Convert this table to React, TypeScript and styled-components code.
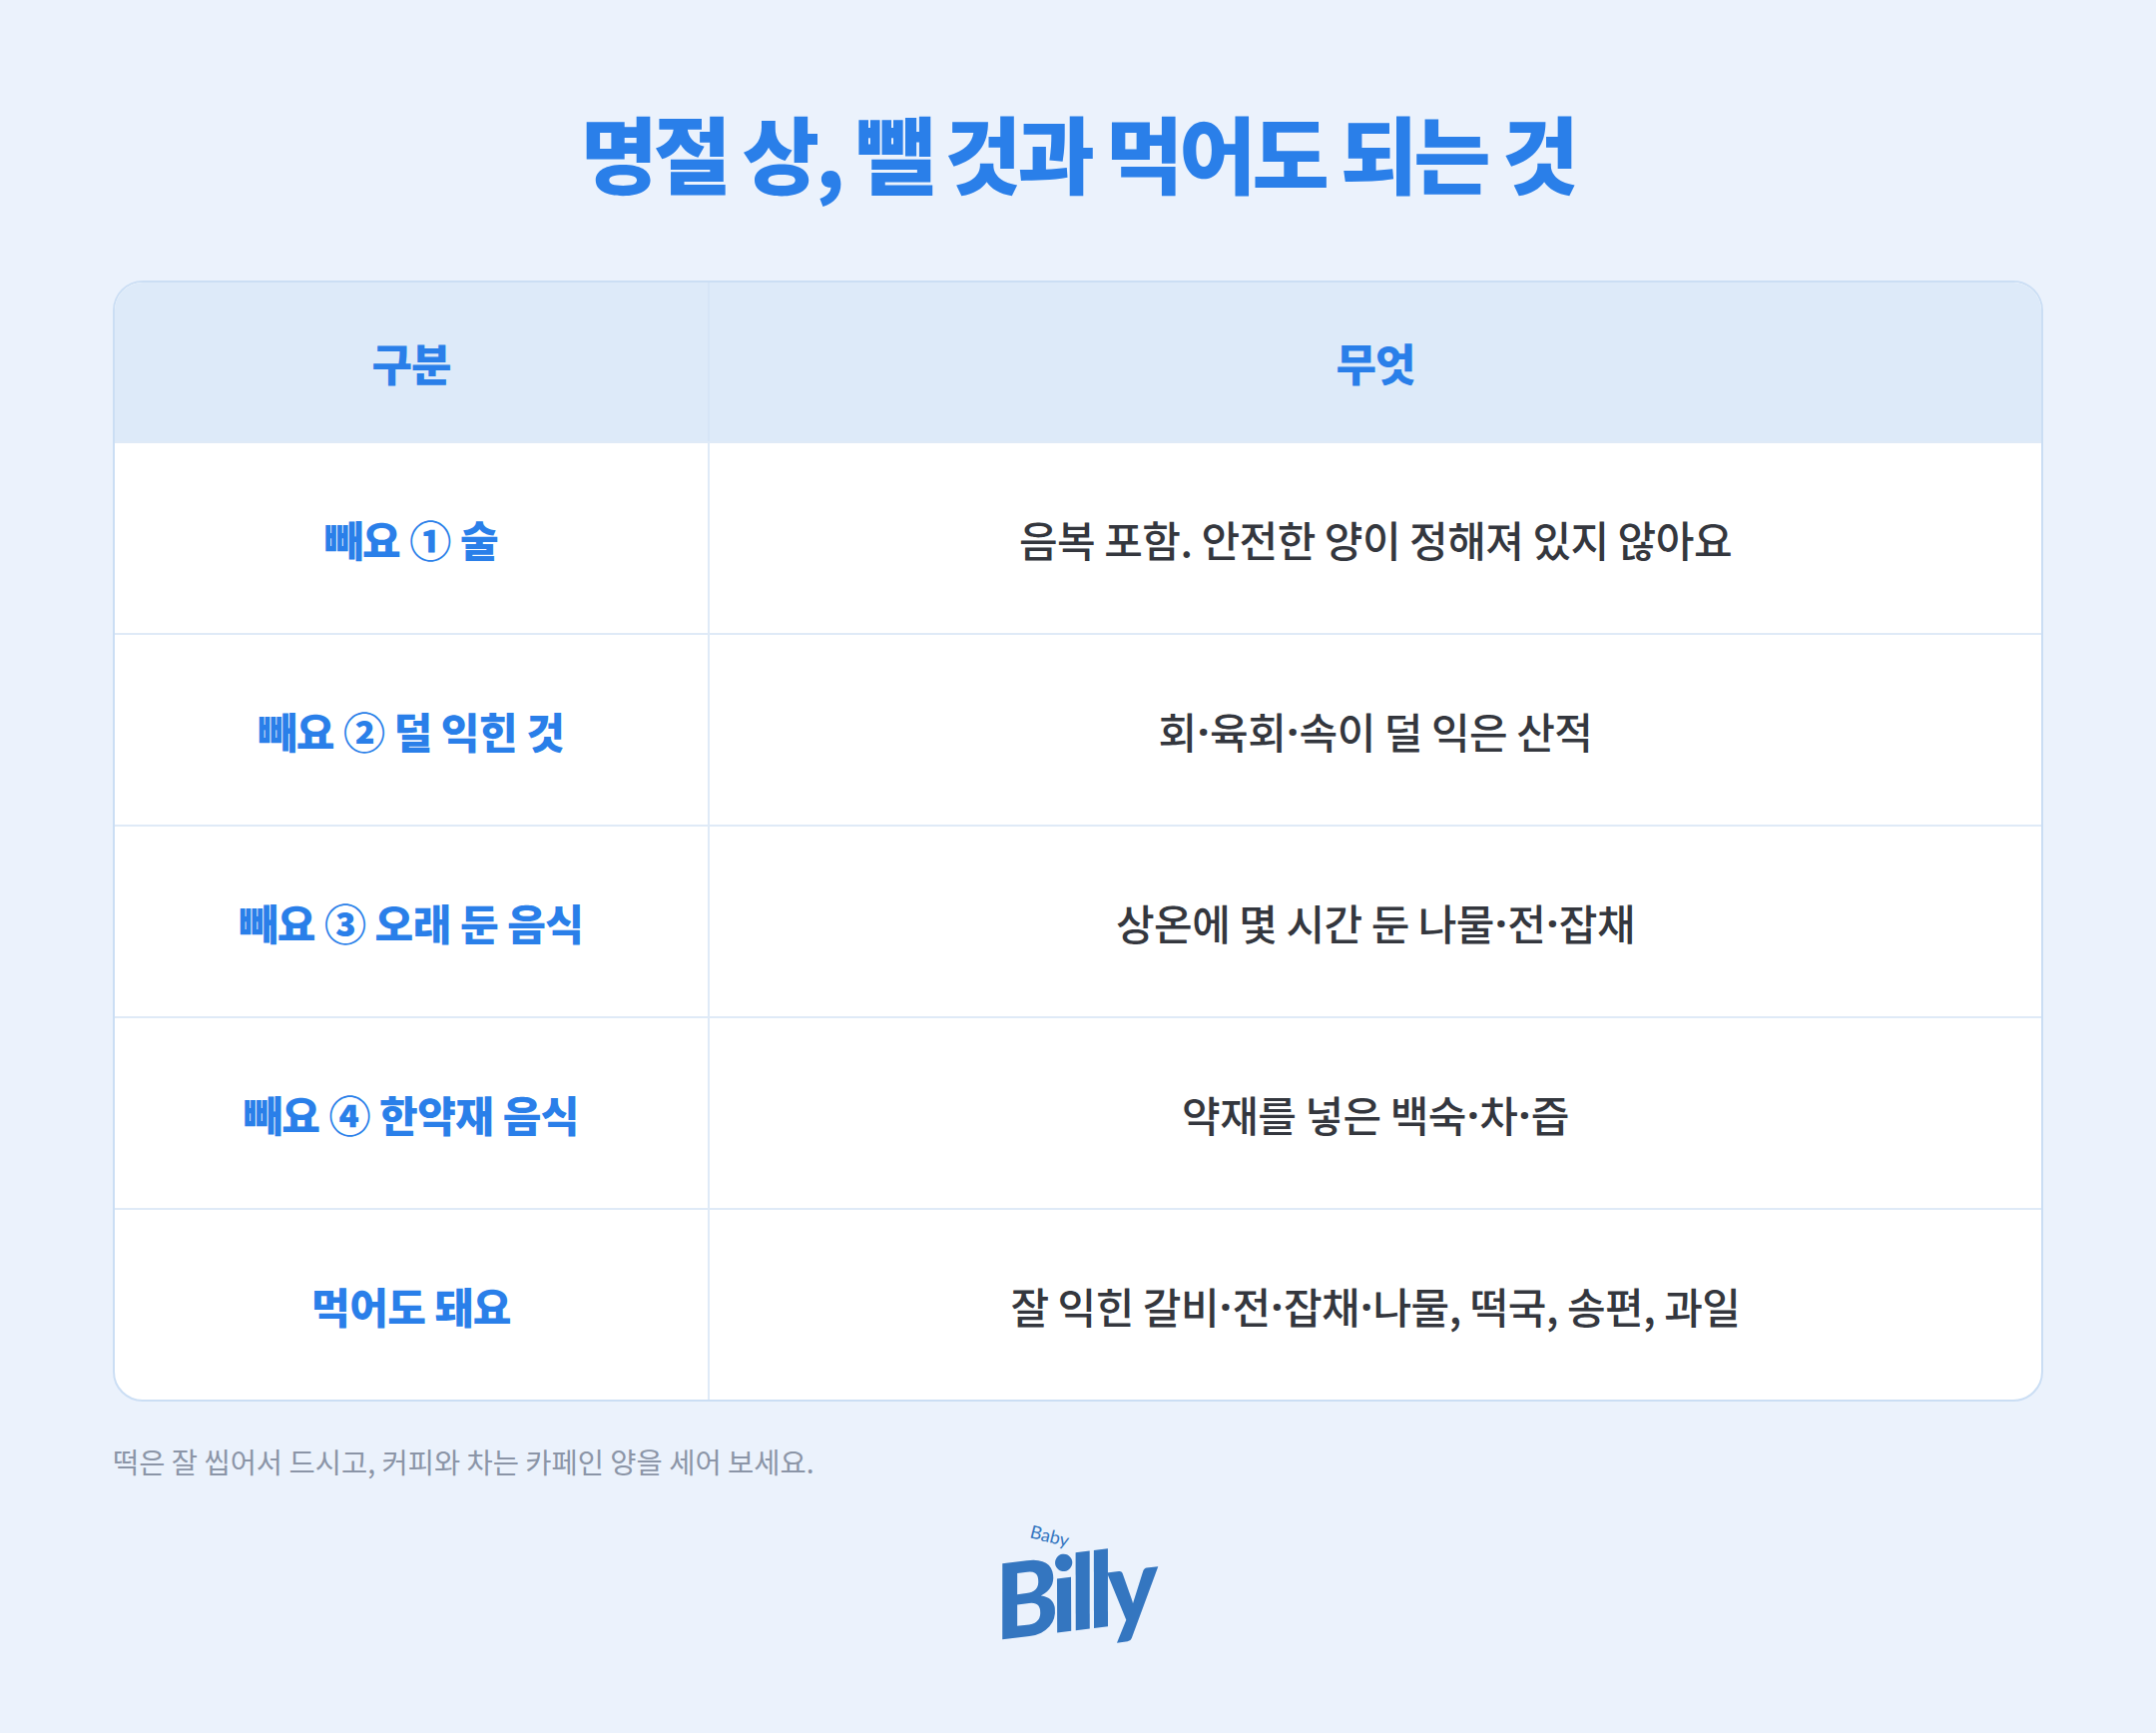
import React from "react";
import styled, { createGlobalStyle } from "styled-components";

const GlobalStyle = createGlobalStyle`
  html, body {
    margin: 0;
    padding: 0;
    background: #ebf2fc;
  }
  body {
    font-family: "Noto Sans CJK KR", "Noto Sans", sans-serif;
  }
`;

const Page = styled.div`
  width: 2160px;
  min-height: 1736px;
  box-sizing: border-box;
  padding: 92px 113px 0;
  display: flex;
  flex-direction: column;
  background: #ebf2fc;
`;

const Title = styled.h1`
  margin: 0;
  text-align: center;
  font-size: 84px;
  line-height: 120px;
  font-weight: 900;
  letter-spacing: -4px;
  color: #2a7fe9;
`;

const Table = styled.div`
  margin-top: 69px;
  border: 2px solid #cbdef4;
  border-radius: 30px;
  overflow: hidden;
  background: #ffffff;
  display: grid;
  grid-template-columns: 596px 1fr;
`;

const HeadCell = styled.div<{ $last?: boolean }>`
  height: 159px;
  display: flex;
  align-items: center;
  justify-content: center;
  background: #ddeaf9;
  border-right: ${(p) => (p.$last ? "none" : "2px solid #d6e5f7")};
  font-size: 44px;
  font-weight: 800;
  letter-spacing: -1px;
  color: #2a7fe9;
`;

const Cell = styled.div<{ $kind: "label" | "value" }>`
  height: 190px;
  display: flex;
  align-items: center;
  justify-content: center;
  border-top: 2px solid #dfeaf7;
  border-right: ${(p) => (p.$kind === "label" ? "2px solid #dfeaf7" : "none")};
  font-size: 42px;
  letter-spacing: -0.5px;
  font-weight: ${(p) => (p.$kind === "label" ? 800 : 500)};
  color: ${(p) => (p.$kind === "label" ? "#2a7fe9" : "#34373e")};
`;

const Dot = styled.span`
  font-family: "Noto Sans", "DejaVu Sans", sans-serif;
  font-weight: 700;
  margin: 0 1px;
`;

const Note = styled.p`
  margin: 40px 0 0;
  font-size: 28.5px;
  line-height: 40px;
  letter-spacing: 0;
  color: #8b95a7;
`;

const LogoWrap = styled.div`
  margin-top: 48px;
  display: flex;
  justify-content: center;
`;

const Logo = styled.div`
  position: relative;
  width: 170px;
  height: 130px;
  margin-left: 2px;
`;

const LogoBaby = styled.span`
  position: absolute;
  left: 34px;
  top: -10px;
  font-family: "Lato", "Noto Sans", sans-serif;
  font-size: 18px;
  font-weight: 400;
  color: #3476c0;
  transform: rotate(14deg);
  transform-origin: left bottom;
`;

const LogoBilly = styled.span`
  position: absolute;
  left: 0;
  top: 16px;
  font-family: "Lato", "Noto Sans", sans-serif;
  font-size: 104px;
  line-height: 110px;
  font-weight: 900;
  font-style: italic;
  letter-spacing: -7px;
  color: #3476c0;
  transform: rotate(-7deg);
  transform-origin: left center;
`;

const rows: { label: string; value: string }[] = [
  { label: "빼요 ① 술", value: "음복 포함. 안전한 양이 정해져 있지 않아요" },
  { label: "빼요 ② 덜 익힌 것", value: "회·육회·속이 덜 익은 산적" },
  { label: "빼요 ③ 오래 둔 음식", value: "상온에 몇 시간 둔 나물·전·잡채" },
  { label: "빼요 ④ 한약재 음식", value: "약재를 넣은 백숙·차·즙" },
  { label: "먹어도 돼요", value: "잘 익힌 갈비·전·잡채·나물, 떡국, 송편, 과일" },
];

function withDots(text: string) {
  const parts = text.split("·");
  return parts.map((p, i) => (
    <React.Fragment key={i}>
      {p}
      {i < parts.length - 1 && <Dot>·</Dot>}
    </React.Fragment>
  ));
}

export default function App() {
  return (
    <>
      <GlobalStyle />
      <Page>
        <Title>명절 상, 뺄 것과 먹어도 되는 것</Title>
        <Table>
          <HeadCell>구분</HeadCell>
          <HeadCell $last>무엇</HeadCell>
          {rows.map((r, i) => (
            <React.Fragment key={i}>
              <Cell $kind="label">{r.label}</Cell>
              <Cell $kind="value">{withDots(r.value)}</Cell>
            </React.Fragment>
          ))}
        </Table>
        <Note>떡은 잘 씹어서 드시고, 커피와 차는 카페인 양을 세어 보세요.</Note>
        <LogoWrap>
          <Logo>
            <LogoBaby>Baby</LogoBaby>
            <LogoBilly>Billy</LogoBilly>
          </Logo>
        </LogoWrap>
      </Page>
    </>
  );
}
